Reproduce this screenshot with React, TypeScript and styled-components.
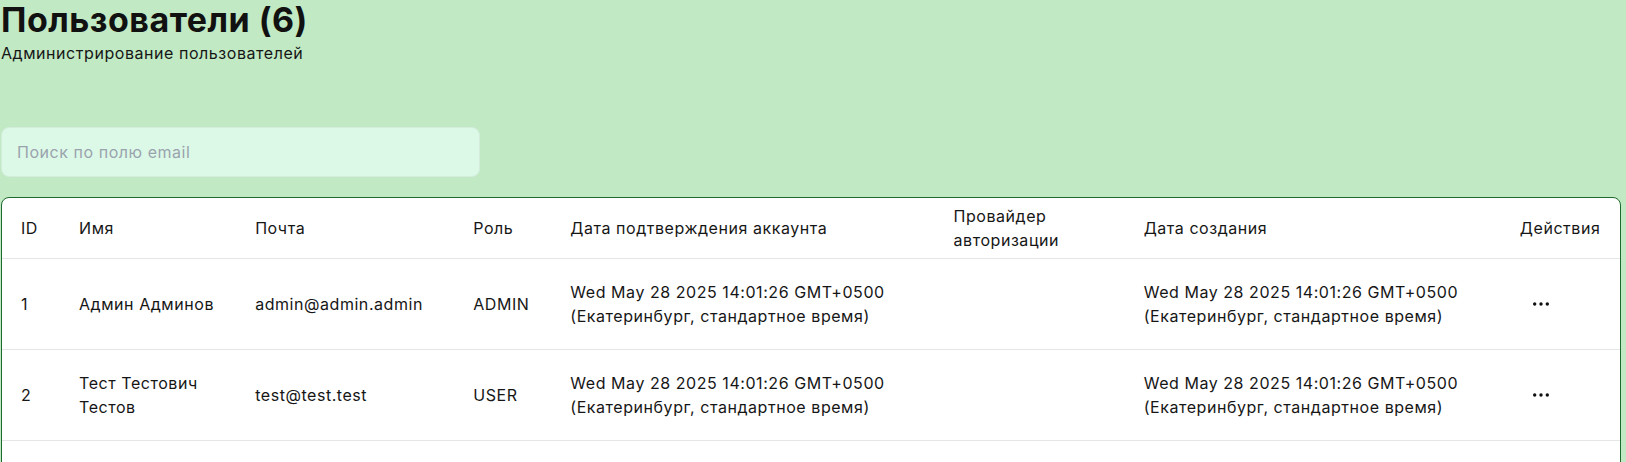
import React from "react";
import styled, { createGlobalStyle } from "styled-components";

const Global = createGlobalStyle`
  html, body { margin: 0; padding: 0; }
  body {
    background: #c1e9c3;
    font-family: "Inter", "Open Sans", sans-serif;
    letter-spacing: 0.55px;
    color: #161616;
  }
  * { box-sizing: border-box; }
`;

const Page = styled.main`
  padding: 0 5px 0 1px;
`;

const Title = styled.h1`
  margin: 0;
  font-size: 34px;
  line-height: 40px;
  font-weight: 700;
  letter-spacing: 0.5px;
  color: #111;
`;

const Subtitle = styled.p`
  margin: 1px 0 0;
  font-size: 16px;
  line-height: 24px;
`;

const SearchInput = styled.input`
  display: block;
  margin-top: 62px;
  width: 479px;
  height: 50px;
  padding: 0 15px;
  border: 1px solid #d3ecdc;
  border-radius: 8px;
  background: #dcf9e8;
  font-family: inherit;
  font-size: 16px;
  letter-spacing: inherit;
  color: #222;
  outline: none;
  &::placeholder { color: #9aa3ad; }
`;

const Card = styled.section`
  margin-top: 20px;
  background: #fff;
  border: 1px solid #1d6a2e;
  border-radius: 8px;
  overflow: hidden;
`;

const Table = styled.table`
  width: 100%;
  border-collapse: collapse;
  table-layout: fixed;
  font-size: 16px;
  line-height: 24px;
`;

const HeadCell = styled.th`
  text-align: left;
  font-weight: 400;
  padding: 6px 10px 6px 19px;
  vertical-align: middle;
  border-bottom: 1px solid #e4e6e8;
`;

const Cell = styled.td`
  padding: 21px 10px 21px 19px;
  vertical-align: middle;
  border-bottom: 1px solid #e4e6e8;
`;

const DotsButton = styled.button`
  display: flex;
  align-items: center;
  padding: 6px 13px;
  border: none;
  background: transparent;
  cursor: pointer;
  color: #111;
`;

const cols = [58, 176, 218, 97, 383, 190, 376, 119];

type User = {
  id: number;
  name: string;
  email: string;
  role: string;
  confirmed: string;
  provider: string;
  created: string;
};

const date = "Wed May 28 2025 14:01:26 GMT+0500 (Екатеринбург, стандартное время)";

const users: User[] = [
  { id: 1, name: "Админ Админов", email: "admin@admin.admin", role: "ADMIN", confirmed: date, provider: "", created: date },
  { id: 2, name: "Тест Тестович Тестов", email: "test@test.test", role: "USER", confirmed: date, provider: "", created: date },
  { id: 3, name: "Иван Иванов", email: "ivan@test.test", role: "USER", confirmed: date, provider: "", created: date },
  { id: 4, name: "Пётр Петров", email: "petr@test.test", role: "USER", confirmed: date, provider: "", created: date },
  { id: 5, name: "Анна Смирнова", email: "anna@test.test", role: "USER", confirmed: date, provider: "", created: date },
  { id: 6, name: "Мария Кузнецова", email: "maria@test.test", role: "USER", confirmed: date, provider: "", created: date },
];

const Dots = () => (
  <svg width="16" height="4" viewBox="0 0 16 4" aria-hidden="true">
    <circle cx="1.7" cy="2" r="1.7" fill="currentColor" />
    <circle cx="8" cy="2" r="1.7" fill="currentColor" />
    <circle cx="14.3" cy="2" r="1.7" fill="currentColor" />
  </svg>
);

export default function App() {
  return (
    <>
      <Global />
      <Page>
        <Title>Пользователи (6)</Title>
        <Subtitle>Администрирование пользователей</Subtitle>
        <SearchInput placeholder="Поиск по полю email" />
        <Card>
          <Table>
            <colgroup>
              {cols.map((w, i) => (
                <col key={i} style={{ width: w }} />
              ))}
            </colgroup>
            <thead>
              <tr>
                <HeadCell>ID</HeadCell>
                <HeadCell>Имя</HeadCell>
                <HeadCell>Почта</HeadCell>
                <HeadCell>Роль</HeadCell>
                <HeadCell>Дата подтверждения аккаунта</HeadCell>
                <HeadCell>Провайдер авторизации</HeadCell>
                <HeadCell>Дата создания</HeadCell>
                <HeadCell>Действия</HeadCell>
              </tr>
            </thead>
            <tbody>
              {users.map((u) => (
                <tr key={u.id}>
                  <Cell>{u.id}</Cell>
                  <Cell>{u.name}</Cell>
                  <Cell>{u.email}</Cell>
                  <Cell>{u.role}</Cell>
                  <Cell>{u.confirmed}</Cell>
                  <Cell>{u.provider}</Cell>
                  <Cell>{u.created}</Cell>
                  <Cell>
                    <DotsButton aria-label="Действия">
                      <Dots />
                    </DotsButton>
                  </Cell>
                </tr>
              ))}
            </tbody>
          </Table>
        </Card>
      </Page>
    </>
  );
}
